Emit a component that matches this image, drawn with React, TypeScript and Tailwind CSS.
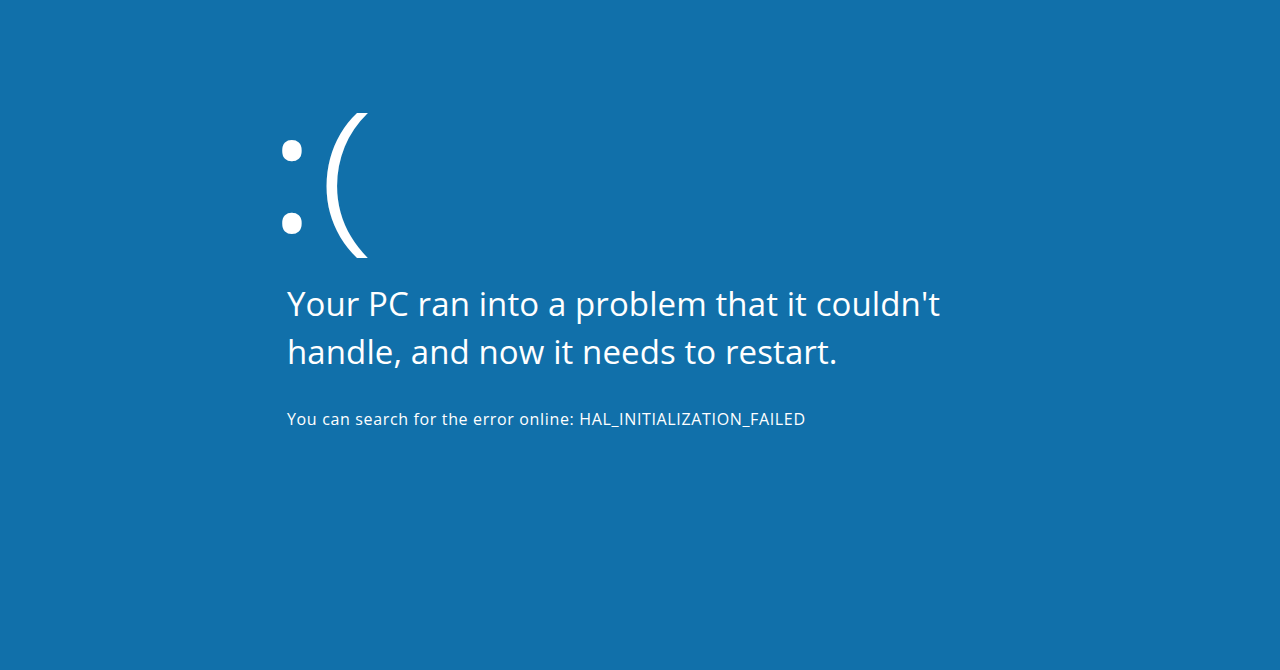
export default function App() {
  return (
    <div className="h-[670px] w-[1280px] overflow-hidden bg-[#1170aa] text-white" style={{ fontFamily: '"Open Sans", "Noto Sans", sans-serif' }}>
      <div className="pl-[287px] pt-[84px]">
        {/* sad face */}
        <div className="flex h-[167px] items-start text-[167px] leading-none">
          <span className="-ml-[17px] font-medium">:</span>
          <span className="ml-[4px] inline-block origin-left scale-x-125 font-light">(</span>
        </div>
        <p className="mt-[29px] w-[720px] text-[33px] leading-[48px] font-normal tracking-[0.1px]">
          Your PC ran into a problem that it couldn't handle, and now it needs to restart.
        </p>
        <p className="mt-[33px] text-[16px] leading-[20px] font-normal tracking-[0.65px]">
          You can search for the error online: HAL_INITIALIZATION_FAILED
        </p>
      </div>
    </div>
  )
}
